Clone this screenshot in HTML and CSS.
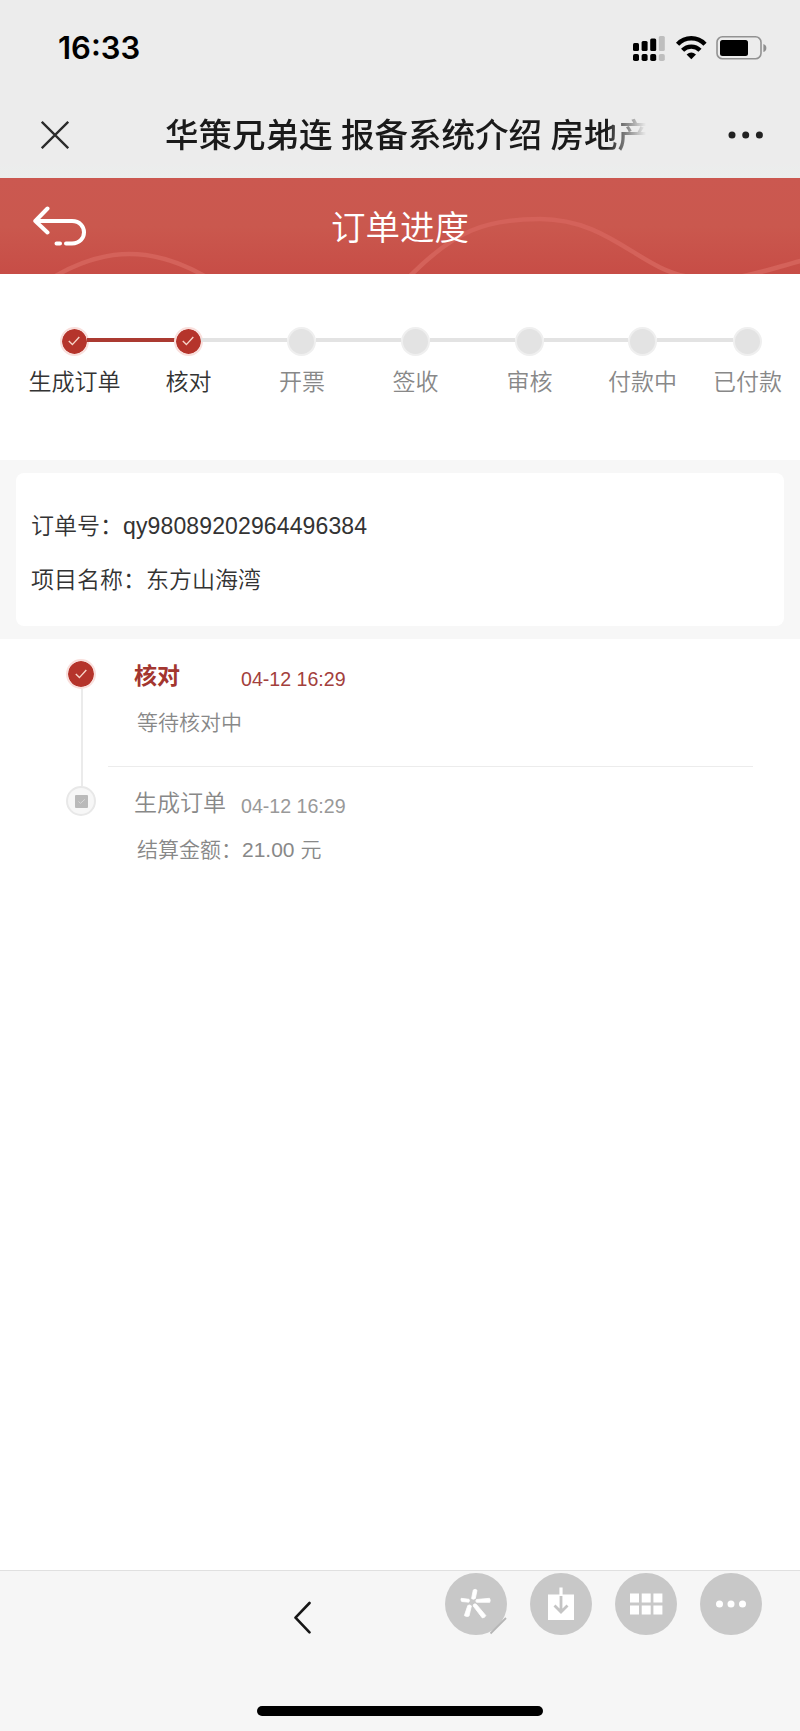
FILE: index.html
```html
<!DOCTYPE html>
<html lang="zh-CN">
<head>
<meta charset="utf-8">
<title>订单进度</title>
<link rel="stylesheet" href="styles.css">
</head>
<body>
<div class="screen">
  <div class="status-bar">
    <span class="time">16:33</span>
    <svg class="status-icons" width="136" height="30" viewBox="0 0 136 30">
      <g fill="#000">
        <rect x="1" y="10" width="6" height="8" rx="1.5"/><rect x="9.6" y="8" width="6" height="10" rx="1.5"/><rect x="18.2" y="5.5" width="6" height="12.5" rx="1.5"/>
        <rect x="1" y="21" width="6" height="7" rx="1.8"/><rect x="9.6" y="21" width="6" height="7" rx="1.8"/><rect x="18.2" y="21" width="6" height="7" rx="1.8"/>
      </g>
      <g fill="#bebebe"><rect x="26.8" y="3" width="6" height="15" rx="1.5"/><rect x="26.8" y="21" width="6" height="7" rx="1.8"/></g>
      <g fill="none" stroke="#000" stroke-width="4.400">
        <path d="M45.6 11.2a18.7 18.7 0 0 1 27.4 0"/><path d="M50.6 17.200a12.3 12.3 0 0 1 17.4 0"/>
      </g>
      <path d="M54.6 21.400q4.700-4 9.400 0L59.3 26.200z" fill="#000"/>
      <rect x="85" y="3.8" width="44" height="22" rx="5.5" fill="none" stroke="#929292" stroke-width="1.6"/>
      <rect x="88" y="7" width="28" height="16" rx="2.5"/>
      <path d="M131.4 11q3 1 3 4t-3 4z" fill="#8f8f8f"/>
    </svg>
  </div>
  <div class="nav-bar">
    <svg class="close" width="28" height="28" viewBox="0 0 28 28"><path d="M.8.8l26.4 26.4M27.2.8.8 27.2" stroke="#2b2b2b" stroke-width="2.3"/></svg>
    <h1 class="page-title">华策兄弟连 报备系统介绍 房地产</h1>
    <svg class="more" width="36" height="8" viewBox="0 0 36 8" fill="#222"><circle cx="4" cy="4" r="3.5"/><circle cx="17.7" cy="4" r="3.5"/><circle cx="31.4" cy="4" r="3.5"/></svg>
  </div>

  <header class="banner">
    <svg class="waves" width="800" height="96" viewBox="0 0 800 96" fill="none" stroke="#d4625a" stroke-width="4.5">
      <path d="M52 100C105 68 154 68 208 100"/>
      <path d="M408 100C455 52 486 41 540 41C610 41 640 92 690 99C735 106 765 92 804 82"/>
    </svg>
    <svg class="back" width="54" height="40" viewBox="0 0 54 40" fill="none" stroke="#fff" stroke-width="4" stroke-linecap="round" stroke-linejoin="round">
      <path d="M15.500 2.500 3.300 15l12.200 11.500M3.300 15H40c16 0 16 22.500 0 22.500h-6M24.500 37.500h3.500"/>
    </svg>
    <h2 class="banner-title">订单进度</h2>
  </header>

  <section class="steps">
    <div class="step done"><div class="track"><i class="line none"></i><span class="dot"><svg width="12" height="10" viewBox="0 0 12 10"><path d="M.8 5l3.600 3.600L11.300 1"/></svg></span><i class="line"></i></div><p>生成订单</p></div>
    <div class="step done current"><div class="track"><i class="line"></i><span class="dot"><svg width="12" height="10" viewBox="0 0 12 10"><path d="M.8 5l3.600 3.600L11.300 1"/></svg></span><i class="line"></i></div><p>核对</p></div>
    <div class="step"><div class="track"><i class="line"></i><span class="dot"></span><i class="line"></i></div><p>开票</p></div>
    <div class="step"><div class="track"><i class="line"></i><span class="dot"></span><i class="line"></i></div><p>签收</p></div>
    <div class="step"><div class="track"><i class="line"></i><span class="dot"></span><i class="line"></i></div><p>审核</p></div>
    <div class="step"><div class="track"><i class="line"></i><span class="dot"></span><i class="line"></i></div><p>付款中</p></div>
    <div class="step"><div class="track"><i class="line"></i><span class="dot"></span><i class="line none"></i></div><p>已付款</p></div>
  </section>

  <section class="order">
    <div class="card">
      <p>订单号：<span class="order-no">qy98089202964496384</span></p>
      <p>项目名称：东方山海湾</p>
    </div>
  </section>

  <main class="timeline">
    <article class="event active">
      <div class="rail">
        <span class="mark"><svg width="12" height="10" viewBox="0 0 12 10"><path d="M.8 5l3.600 3.600L11.300 1"/></svg></span>
        <i class="stem"></i>
      </div>
      <div class="body">
        <div class="head"><h3>核对</h3><time>04-12 16:29</time></div>
        <p class="desc">等待核对中</p>
      </div>
    </article>
    <article class="event">
      <div class="rail">
        <span class="mark"><svg width="13" height="13" viewBox="0 0 13 13"><rect width="13" height="13" rx="1" fill="#bababa"/><path d="M3.500 6.500l2 1.800L9.800 4.400" fill="none" stroke="#d8d8d8"/></svg></span>
      </div>
      <div class="body">
        <div class="head"><h3>生成订单</h3><time>04-12 16:29</time></div>
        <p class="desc">结算金额：21.00 元</p>
      </div>
    </article>
  </main>

  <footer class="toolbar">
    <svg class="prev" width="18" height="34" viewBox="0 0 18 34"><path d="M16.500 2 2.500 16.700l14 14.600" fill="none" stroke="#161616" stroke-width="2.600" stroke-linecap="round" stroke-linejoin="round"/></svg>
    <div class="tools">
      <svg width="62" height="62" viewBox="0 0 62 62">
        <circle cx="31" cy="31" r="31" fill="#c8c8c8"/>
        <g fill="#fff" stroke="#fff" stroke-width=".8" stroke-linejoin="round">
          <path d="M28.300 17q2-1.500 3.700.3L30.300 25.500q-2 1.500-3.700 0z"/>
          <path d="M31.500 26.500 44.500 25.300q1.300 1.700.3 4H31.500q-1.500-1.300 0-2.800z"/>
          <path d="M28.500 31.500q1.500-1.500 3 0l9.300 11q-.8 2.400-3.500 2.400L28.200 33z"/>
          <path d="M22.800 32.500q2-1.300 3.600.4L24 43q-2.400 1.300-4.600-.4z"/>
          <path d="M16.200 25.300 24 26.300q1.200 1.500-.3 2.900l-7-.7q-1.300-1.500-.5-3.200z"/>
        </g>
        <path d="M46 62V60L60 45h2v17z" fill="#f6f6f6"/>
        <path d="M45.500 60.500 61 45" stroke="#b5b5b5" stroke-width="1.800"/>
      </svg>
      <svg width="62" height="62" viewBox="0 0 62 62">
        <circle cx="31" cy="31" r="31" fill="#c8c8c8"/>
        <path d="M18 21.500h26V47H18zM29.400 14.500h3.200v8h-3.200z" fill="#fff"/>
        <path d="M31 23v15.500M24.500 32.500l6.500 6.500 6.500-6.500" fill="none" stroke="#c4c4c4" stroke-width="2.800"/>
      </svg>
      <svg width="62" height="62" viewBox="0 0 62 62">
        <circle cx="31" cy="31" r="31" fill="#c8c8c8"/>
        <path d="M15 20.500h9v9h-9zm11.700 0h9v9h-9zm11.700 0h9v9h-9zM15 32.500h9v9h-9zm11.700 0h9v9h-9zm11.700 0h9v9h-9z" fill="#fff"/>
      </svg>
      <svg width="62" height="62" viewBox="0 0 62 62">
        <circle cx="31" cy="31" r="31" fill="#c8c8c8"/>
        <g fill="#fff"><circle cx="19.500" cy="31" r="3.500"/><circle cx="31" cy="31" r="3.500"/><circle cx="42.500" cy="31" r="3.500"/></g>
      </svg>
    </div>
    <div class="home-indicator"></div>
  </footer>
</div>
</body>
</html>
```
FILE: styles.css
```css
* { box-sizing: border-box; margin: 0; padding: 0; }
body {
  background: #fff;
  font-family: "Liberation Sans", "Noto Sans CJK SC", sans-serif;
  color: #333;
}
.screen { width: 800px; height: 1731px; display: flex; flex-direction: column; }

.status-bar {
  height: 96px; background: #ececec;
  display: flex; justify-content: space-between;
  padding: 33px 32px 0 58px;
}
.time { font: 600 31px/30px Inter, sans-serif; color: #000; }

.nav-bar {
  height: 82px; background: linear-gradient(#ececec 80%, #ebeeed);
  display: flex; align-items: flex-start;
  padding: 12px 34px 0 41px;
}
.close { margin-top: 13px; }
.page-title {
  width: 490px; margin-left: 96px; margin-right: 73px;
  font: 500 33.5px/50px "Noto Sans CJK SC", sans-serif;
  word-spacing: 1px;
  color: #1a1a1a; white-space: nowrap;
  -webkit-mask-image: linear-gradient(90deg, #000 441px, transparent 481px);
  mask-image: linear-gradient(90deg, #000 441px, transparent 481px);
}
.more { margin-top: 23px; flex: none; }

.banner {
  position: relative; height: 96px;
  background: linear-gradient(#cb5850, #ca584e 50%, #c74d46);
  display: flex; align-items: center; justify-content: center;
}
.waves { position: absolute; inset: 0; }
.back { position: absolute; left: 32px; top: 28px; }
.banner-title { position: relative; font-size: 34.500px; font-weight: 350; line-height: 50px; color: #fff; margin-top: 3px; }

.steps {
  height: 186px; padding: 52px 4px 0 17px;
  display: grid; grid-template-columns: 114px 114px 113px 114px 114px 112px 98px;
  align-items: start;
}
.track { display: flex; align-items: center; height: 30px; }
.line { flex: 1; height: 4px; background: #e3e3e3; margin-top: -3px; }
.line.none { background: none; }
.done .line:not(.none) { background: #ab3a31; }
.current .line:last-child { background: #e3e3e3 !important; }
.done .line:first-child { margin-right: -2px; }
.done .line:last-child { margin-left: -2px; }
.dot {
  width: 29px; height: 29px; border-radius: 50%;
  border: 2.500px solid #efefef; background: #e3e3e3;
  display: flex; align-items: center; justify-content: center;
}
.done .dot { border-color: #f9dfdc; background: #b5342b; background-clip: padding-box; }
.dot path, .active .mark path { fill: none; stroke: #f7d5c9; stroke-width: 1.400; }
.step p {
  margin-top: 9px; padding-left: 1px;
  font-size: 23px; line-height: 34px; text-align: center; white-space: nowrap;
  color: #888; font-weight: 350;
}
.step.done p { color: #333; }

.order { height: 179px; background: #f7f7f7; padding: 13px 16px; }
.card { height: 153px; background: #fff; border-radius: 8px; padding: 26px 15px 0; }
.card p { font-size: 23px; line-height: 54px; font-weight: 350; }
.order-no { letter-spacing: .13px; }

.timeline { flex: 1; padding: 20px 47px 0 66px; }
.event { display: flex; height: 127px; }
.rail { width: 30px; flex: none; display: flex; flex-direction: column; align-items: center; }
.mark {
  width: 30px; height: 30px; flex: none; border-radius: 50%;
  border: 2px solid #e8e8e8; background: #f7f7f7;
  display: flex; align-items: center; justify-content: center;
}
.active .mark { border: 2.500px solid #f9dfdc; background: #b5342b; background-clip: padding-box; }
.stem { width: 2px; flex: 1; margin-left: 2px; background: #ebebeb; }
.body { flex: 1; margin-left: 12px; padding-left: 26px; }
.active .body { margin-bottom: 19px; border-bottom: 1px solid #ececec; }
.head { display: flex; align-items: center; height: 34px; }
.head h3 { width: 107px; font-size: 23px; line-height: 34px; font-weight: 350; color: #888; white-space: nowrap; }
.head time { font-size: 19.600px; line-height: 28px; color: #999; margin-top: 6px; }
.active h3 { color: #a3362f; font-weight: 700; }
.active time { color: #a3403c; }
.desc { margin: 14px 0 0 3px; font-size: 21px; line-height: 32px; color: #888; font-weight: 350; }

.toolbar {
  height: 161px; background: #f6f6f6; border-top: 1px solid #e0e0e0;
  display: grid; grid-template-columns: 18px 317px;
  grid-template-rows: 133px 11px; align-items: start;
  padding: 2px 38px 0 293px; column-gap: 134px;
}
.prev { margin-top: 28px; }
.tools { display: flex; gap: 23px; }
.tools svg { flex: none; }
.home-indicator { grid-column: 1 / -1; width: 286px; height: 10px; border-radius: 5px; background: #000; margin-left: -36px; }
```
